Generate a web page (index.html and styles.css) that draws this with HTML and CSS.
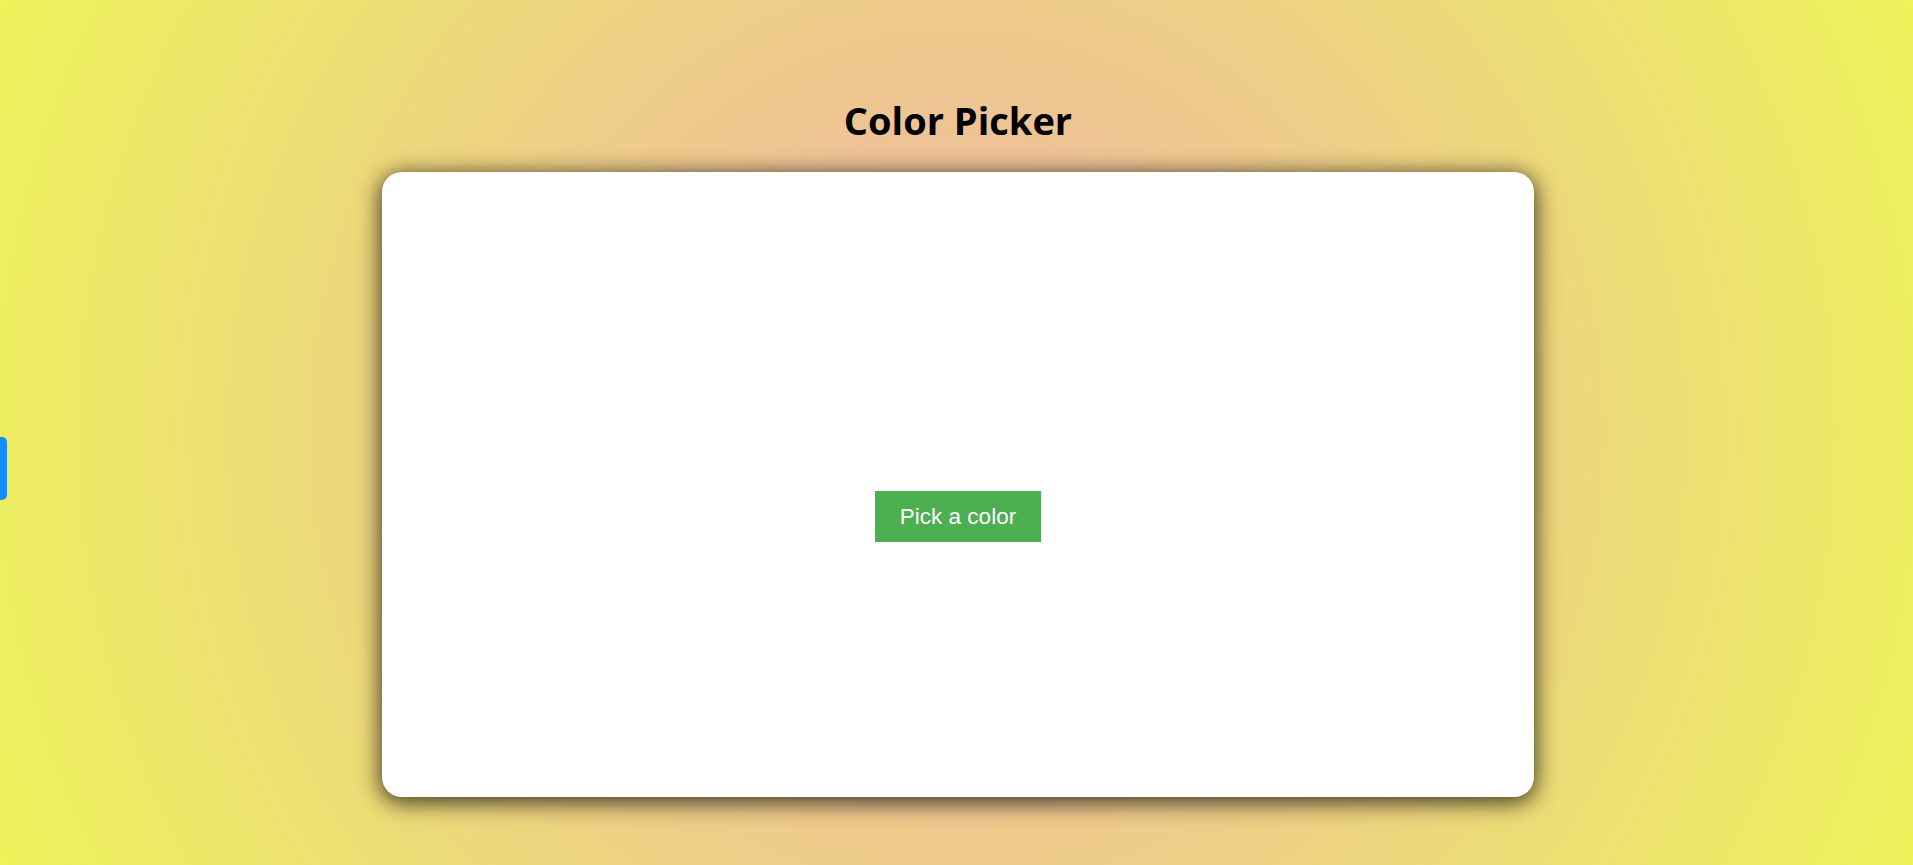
FILE: index.html
```html
<!DOCTYPE html>
<html lang="en">
<head>
<meta charset="utf-8">
<title>Color Picker</title>
<link rel="stylesheet" href="styles.css">
</head>
<body>
<div class="side-tab"></div>
<main class="page">
  <h1 class="title">Color Picker</h1>
  <section class="card">
    <button class="pick-btn" type="button">Pick a color</button>
  </section>
</main>
</body>
</html>
```

FILE: styles.css
```css
html, body {
  margin: 0;
  padding: 0;
  height: 100%;
}

body {
  background: radial-gradient(circle, rgb(238, 176, 172) 0%, rgb(237, 243, 90) 100%);
  font-family: "Open Sans", "Noto Sans", sans-serif;
  overflow: hidden;
}

.page {
  display: flex;
  flex-direction: column;
  align-items: center;
  padding: 98px 0 0 3px;
}

.title {
  margin: 0 0 28px;
  font-size: 38px;
  line-height: 1.2;
  font-weight: 700;
  color: #000;
}

.card {
  width: 1152px;
  height: 625px;
  box-sizing: border-box;
  background: #fff;
  border-radius: 20px;
  box-shadow: 0 4px 22px 2px rgba(0, 0, 0, 0.72);
  display: flex;
  align-items: center;
  justify-content: center;
  padding-top: 65px;
}

.pick-btn {
  background: #4caf50;
  color: #fff;
  border: none;
  font-family: "Liberation Sans", Arial, sans-serif;
  font-size: 22.5px;
  line-height: 25px;
  padding: 13px 25px;
  cursor: pointer;
}

.side-tab {
  position: fixed;
  left: 0;
  top: 437px;
  width: 7px;
  height: 63px;
  background: #168dfd;
  border-radius: 0 5px 5px 0;
}
```
